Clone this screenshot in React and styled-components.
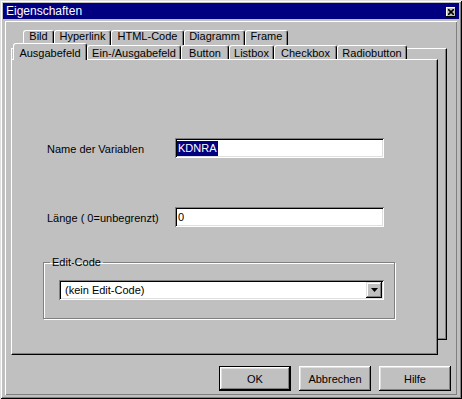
import styled, { createGlobalStyle } from "styled-components";

const GlobalStyle = createGlobalStyle`
  html, body {
    margin: 0;
    padding: 0;
    background: #c0c0c0;
  }
  body {
    font-family: "Liberation Sans", Arial, sans-serif;
    font-size: 11px;
    color: #000;
  }
  * {
    box-sizing: border-box;
  }
`;

const Window = styled.div`
  width: 462px;
  height: 399px;
  padding: 3px;
  background: #c0c0c0;
  box-shadow: inset 1px 1px 0 #dfdfdf, inset -1px -1px 0 #000,
    inset 2px 2px 0 #fff, inset -2px -2px 0 #808080;
  display: flex;
  flex-direction: column;
`;

const TitleBar = styled.div`
  height: 16px;
  background: #000080;
  color: #fff;
  font-size: 12px;
  display: flex;
  align-items: center;
  justify-content: space-between;
  padding: 0 3px 0 3px;
`;

const CloseButton = styled.div`
  width: 10px;
  height: 10px;
  background: #c0c0c0;
  box-shadow: inset -1px -1px 0 #000, inset 1px 1px 0 #fff;
  display: flex;
  align-items: center;
  justify-content: center;
  margin-top: 1px;
`;

const Panel = styled.div`
  flex: 1;
  margin: 2px 2px 1px 2px;
  padding: 1px;
  box-shadow: inset 1px 1px 0 #fff, inset -1px -1px 0 #808080;
  display: flex;
  flex-direction: column;
`;

const TabArea = styled.div`
  display: grid;
`;

const Layer = styled.div`
  grid-area: 1 / 1;
  display: flex;
  flex-direction: column;
  padding-top: ${(p) => p.$top}px;
`;

const TabRow = styled.div`
  display: flex;
  align-items: flex-end;
  height: ${(p) => p.$height}px;
  padding-left: ${(p) => p.$left}px;
  position: relative;
  z-index: 2;
`;

const Tab = styled.div`
  width: ${(p) => p.$w}px;
  height: ${(p) => p.$h}px;
  display: flex;
  align-items: center;
  justify-content: center;
  padding-top: ${(p) => (p.$active ? 1 : 0)}px;
  padding-bottom: ${(p) => p.$lift || 0}px;
  margin-bottom: ${(p) => (p.$active ? -1 : 0)}px;
  background: #c0c0c0;
  border-top: 1px solid #fff;
  border-left: 1px solid #fff;
  border-right: 1px solid #000;
  border-top-left-radius: 3px;
  border-top-right-radius: 3px;
  box-shadow: inset -1px 0 0 #808080;
  white-space: nowrap;
`;

const Page = styled.div`
  margin-left: 5px;
  width: ${(p) => p.$w}px;
  height: ${(p) => p.$h}px;
  background: #c0c0c0;
  border-top: 1px solid #fff;
  border-left: 1px solid #fff;
  border-right: 1px solid #000;
  border-bottom: 1px solid #000;
  box-shadow: inset -1px -1px 0 #808080;
`;

const Form = styled.div`
  padding: 78px 0 0 31px;
  display: flex;
  flex-direction: column;
`;

const FieldRow = styled.div`
  display: grid;
  grid-template-columns: 128px 209px;
  align-items: center;
  margin: ${(p) => p.$gap || 0}px 0 0 4px;
`;

const Label = styled.span`
  padding-top: 2px;
`;

const Sunken = styled.div`
  height: 20px;
  background: #fff;
  box-shadow: inset 1px 1px 0 #808080, inset -1px -1px 0 #fff,
    inset 2px 2px 0 #000, inset -2px -2px 0 #dfdfdf;
  display: flex;
  align-items: center;
  padding: 2px;
`;

const Selected = styled.span`
  background: #000080;
  color: #fff;
  line-height: 15px;
  padding: 0 1px;
`;

const Value = styled.span`
  padding-left: 1px;
  line-height: 15px;
`;

const GroupBox = styled.fieldset`
  margin: 29px 0 0 0;
  width: 352px;
  height: 63px;
  padding: 0;
  border: 1px solid #808080;
  box-shadow: 1px 1px 0 #fff, inset 1px 1px 0 #fff;
  min-width: 0;
`;

const GroupLegend = styled.legend`
  margin-left: 6px;
  padding: 0 2px;
  line-height: 13px;
  font-size: 11px;
`;

const Combo = styled(Sunken)`
  width: 325px;
  margin: 11px 0 0 15px;
  justify-content: space-between;
`;

const ComboText = styled.span`
  padding-left: 4px;
  line-height: 15px;
`;

const DropButton = styled.div`
  width: 16px;
  height: 16px;
  background: #c0c0c0;
  box-shadow: inset -1px -1px 0 #000, inset 1px 1px 0 #dfdfdf,
    inset -2px -2px 0 #808080, inset 2px 2px 0 #fff;
  display: flex;
  align-items: center;
  justify-content: center;
`;

const Footer = styled.div`
  display: flex;
  justify-content: flex-end;
  gap: 8px;
  margin-top: 11px;
  padding-right: 5px;
`;

const Button = styled.button`
  width: 72px;
  height: 25px;
  font-family: inherit;
  font-size: 11px;
  color: #000;
  background: #c0c0c0;
  border: none;
  padding: 0;
  box-shadow: ${(p) =>
    p.$default
      ? "inset 0 0 0 1px #000, inset -2px -2px 0 #000, inset 2px 2px 0 #fff, inset -3px -3px 0 #808080, inset 3px 3px 0 #dfdfdf"
      : "inset -1px -1px 0 #000, inset 1px 1px 0 #fff, inset -2px -2px 0 #808080, inset 2px 2px 0 #dfdfdf"};
`;

const backTabs = [
  ["Bild", 31],
  ["Hyperlink", 57],
  ["HTML-Code", 73],
  ["Diagramm", 61],
  ["Frame", 43],
];

const frontTabs = [
  ["Ausgabefeld", 74],
  ["Ein-/Ausgabefeld", 94],
  ["Button", 48],
  ["Listbox", 45],
  ["Checkbox", 63],
  ["Radiobutton", 70],
];

export default function App() {
  return (
    <>
      <GlobalStyle />
      <Window>
        <TitleBar>
          <span>Eigenschaften</span>
          <CloseButton>
            <svg width="6" height="6" viewBox="0 0 6 6">
              <path d="M0 0L6 6M6 0L0 6" stroke="#000" strokeWidth="1.6" />
            </svg>
          </CloseButton>
        </TitleBar>
        <Panel>
          <TabArea>
            <Layer $top={8}>
              <TabRow $height={18} $left={17}>
                {backTabs.map(([label, w]) => (
                  <Tab key={label} $w={w} $h={18} $lift={7}>
                    {label}
                  </Tab>
                ))}
              </TabRow>
              <Page $w={436} $h={292} />
            </Layer>
            <Layer $top={21}>
              <TabRow $height={16} $left={7}>
                {frontTabs.map(([label, w], i) => (
                  <Tab key={label} $w={w} $h={i === 0 ? 17 : 14} $active={i === 0}>
                    {label}
                  </Tab>
                ))}
              </TabRow>
              <Page $w={427} $h={296}>
                <Form>
                  <FieldRow>
                    <Label>Name der Variablen</Label>
                    <Sunken>
                      <Selected>KDNRA</Selected>
                    </Sunken>
                  </FieldRow>
                  <FieldRow $gap={49}>
                    <Label>Länge ( 0=unbegrenzt)</Label>
                    <Sunken>
                      <Value>0</Value>
                    </Sunken>
                  </FieldRow>
                  <GroupBox>
                    <GroupLegend>Edit-Code</GroupLegend>
                    <Combo>
                      <ComboText>(kein Edit-Code)</ComboText>
                      <DropButton>
                        <svg width="7" height="4" viewBox="0 0 7 4">
                          <path d="M0 0H7L3.5 4Z" fill="#000" />
                        </svg>
                      </DropButton>
                    </Combo>
                  </GroupBox>
                </Form>
              </Page>
            </Layer>
          </TabArea>
          <Footer>
            <Button $default>OK</Button>
            <Button>Abbrechen</Button>
            <Button>Hilfe</Button>
          </Footer>
        </Panel>
      </Window>
    </>
  );
}
